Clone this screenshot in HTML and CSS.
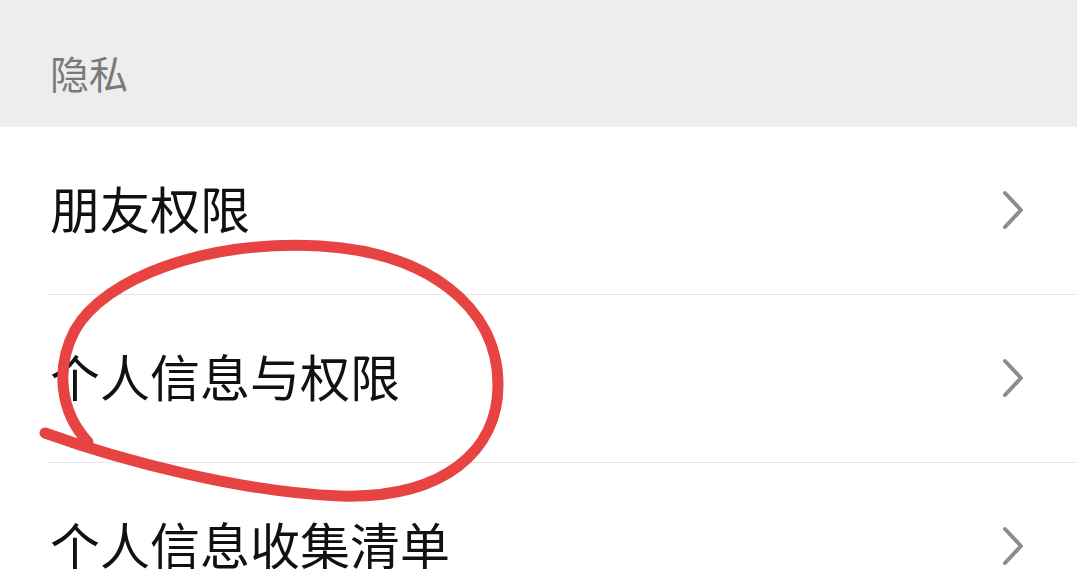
FILE: index.html
```html
<!DOCTYPE html>
<html lang="zh-CN">
<head>
<meta charset="utf-8">
<title>隐私</title>
<link rel="stylesheet" href="styles.css">
</head>
<body>
<div class="page">
  <div class="section-header">隐私</div>
  <ul class="list">
    <li class="row">
      <div class="row-inner">
        <span class="label">朋友权限</span>
        <svg class="chev" viewBox="0 0 24 40" width="24" height="40"><path d="M4 3 L20 20 L4 37" fill="none" stroke="#8c8c8c" stroke-width="4" stroke-linecap="round" stroke-linejoin="round"/></svg>
      </div>
    </li>
    <li class="row">
      <div class="row-inner">
        <span class="label">个人信息与权限</span>
        <svg class="chev" viewBox="0 0 24 40" width="24" height="40"><path d="M4 3 L20 20 L4 37" fill="none" stroke="#8c8c8c" stroke-width="4" stroke-linecap="round" stroke-linejoin="round"/></svg>
      </div>
    </li>
    <li class="row">
      <div class="row-inner">
        <span class="label">个人信息收集清单</span>
        <svg class="chev" viewBox="0 0 24 40" width="24" height="40"><path d="M4 3 L20 20 L4 37" fill="none" stroke="#8c8c8c" stroke-width="4" stroke-linecap="round" stroke-linejoin="round"/></svg>
      </div>
    </li>
  </ul>
  <svg class="annotation" viewBox="0 0 1077 569" width="1077" height="569">
    <path d="M45 433 C 120 460, 240 492, 340 496 C 445 499, 498 450, 498 385 C 498 305, 425 252, 320 246 C 205 240, 105 278, 75 330 C 55 368, 60 412, 88 442" fill="none" stroke="#e84343" stroke-width="11" stroke-linecap="round" stroke-linejoin="round"/>
  </svg>
</div>
</body>
</html>
```
FILE: styles.css
```css
html, body {
  margin: 0;
  padding: 0;
  background: #ffffff;
}
body {
  font-family: "Noto Sans CJK SC", "Noto Sans", sans-serif;
  width: 1077px;
  height: 569px;
  overflow: hidden;
}
.page {
  position: relative;
  width: 1077px;
  height: 569px;
  overflow: hidden;
}
.section-header {
  height: 127px;
  box-sizing: border-box;
  background: #ededed;
  color: #7a7a7a;
  font-size: 39px;
  line-height: 39px;
  padding: 53px 0 0 50px;
}
.list {
  list-style: none;
  margin: 0;
  padding: 0;
}
.row {
  padding-left: 48px;
  height: 168px;
  box-sizing: border-box;
}
.row-inner {
  height: 168px;
  box-sizing: border-box;
  border-bottom: 1.5px solid #e6e6e6;
  display: flex;
  align-items: center;
  justify-content: space-between;
  padding: 0 52px 0 2px;
}
.label {
  font-size: 50px;
  color: #111111;
  line-height: 1;
  margin-bottom: 7px;
}
.chev {
  display: block;
  margin-top: -2px;
}
.annotation {
  position: absolute;
  left: 0;
  top: 0;
  pointer-events: none;
}
```
